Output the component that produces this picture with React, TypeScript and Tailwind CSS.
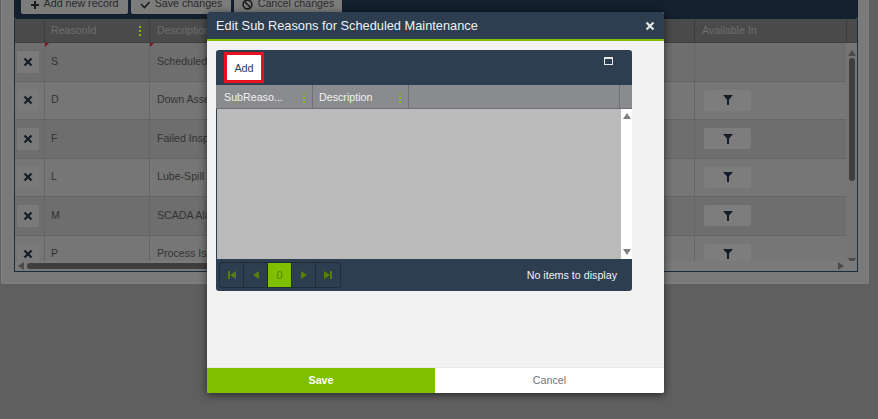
const rows = [
  { id: 'S', desc: 'Scheduled Maintenance', filter: false },
  { id: 'D', desc: 'Down Asset', filter: true },
  { id: 'F', desc: 'Failed Inspection', filter: true },
  { id: 'L', desc: 'Lube-Spill', filter: true },
  { id: 'M', desc: 'SCADA Alarm', filter: true },
  { id: 'P', desc: 'Process Issue', filter: true },
]

function Cross({ className }: { className: string }) {
  return (
    <svg viewBox="0 0 10 10" className={className} fill="none" stroke="currentColor" strokeWidth="2.2">
      <path d="M1.5 1.5l7 7M8.5 1.5l-7 7" />
    </svg>
  )
}

function Filter() {
  return (
    <svg viewBox="0 0 10 10" className="w-[10px] h-[10px] text-[#141d27]" fill="currentColor">
      <path d="M0 0h10L6 4.4V10H4V4.4z" />
    </svg>
  )
}

function Grip() {
  return (
    <span className="flex flex-col gap-[2px] shrink-0">
      <i className="block w-[2px] h-[2px] bg-[#7fbf00]" />
      <i className="block w-[2px] h-[2px] bg-[#7fbf00]" />
      <i className="block w-[2px] h-[2px] bg-[#7fbf00]" />
    </span>
  )
}

type Dir = 'up' | 'down' | 'left' | 'right' | 'first' | 'last'

function Arrow({ dir, className = '' }: { dir: Dir; className?: string }) {
  const d = {
    up: 'M4 1l4 6H0z',
    down: 'M4 7L0 1h8z',
    left: 'M1 4l6-4v8z',
    right: 'M7 4L1 8V0z',
    first: 'M0 0h2v8H0zM8 0v8L2 4z',
    last: 'M8 0H6v8h2zM0 0v8l6-4z',
  }[dir]
  return (
    <svg viewBox="0 0 8 8" className={`w-[8px] h-[8px] ${className}`} fill="currentColor">
      <path d={d} />
    </svg>
  )
}

function PagerCell({ children, active = false }: { children: React.ReactNode; active?: boolean }) {
  return (
    <div
      className={`w-[24px] flex items-center justify-center border-r border-[#1f2d3b] last:border-r-0 text-[#568008] ${
        active ? 'bg-[#7fbf00] text-[11px]' : ''
      }`}
    >
      {children}
    </div>
  )
}

function ToolButton({ label, icon, width }: { label: string; icon: React.ReactNode; width: string }) {
  return (
    <div
      className={`h-[14px] flex items-end justify-center gap-[5px] pb-[5px] rounded-b-[2px] bg-[#7c7c7c] text-[10.7px] leading-[12px] text-[#2a2a2a] ${width}`}
    >
      {icon}
      <span className="whitespace-nowrap">{label}</span>
    </div>
  )
}

function Corner() {
  return <span className="absolute left-0 top-0 w-0 h-0 border-t-[4px] border-r-[4px] border-t-[#8a0f12] border-r-transparent" />
}

function Background() {
  return (
    <div className="h-[284px] mr-[9px] ml-px flex flex-col bg-[#7a7a7a] border-r border-b border-l border-[#808080] pl-[12px] pr-[10px] rounded-b-[2px]">
      <div className="h-[19px] shrink-0 bg-[#14202d] rounded-b-[2px] flex items-start gap-[3px] pl-[7px]">
        <ToolButton
          width="w-[107px]"
          label="Add new record"
          icon={
            <svg viewBox="0 0 8 8" className="w-[8px] h-[8px] text-[#1c1c1c]" fill="currentColor">
              <path d="M3 0h2v3h3v2H5v3H3V5H0V3h3z" />
            </svg>
          }
        />
        <ToolButton
          width="w-[100px]"
          label="Save changes"
          icon={
            <svg viewBox="0 0 10 8" className="w-[10px] h-[8px] text-[#1c1c1c]" fill="none" stroke="currentColor" strokeWidth="1.6">
              <path d="M1 3l3.5 3.5L9.5 1" />
            </svg>
          }
        />
        <ToolButton
          width="w-[108px]"
          label="Cancel changes"
          icon={
            <svg viewBox="0 0 11 11" className="w-[11px] h-[11px] -mb-[1px] text-[#1c1c1c]" fill="none" stroke="currentColor" strokeWidth="1.6">
              <circle cx="5.5" cy="5.5" r="4.4" />
              <path d="M2.5 2.5l6 6" />
            </svg>
          }
        />
      </div>
      <div className="h-[253px] flex flex-col border-l border-r border-b border-[#1e2c3a] overflow-hidden relative">
        <div className="h-[24px] shrink-0 flex bg-[#4a4a4a] text-[10.6px] text-[#6f6f6f] border-b border-[#404040]">
          <div className="w-[30px] border-r border-[#3e3e3e]" />
          <div className="w-[105px] border-r border-[#3e3e3e] flex items-center justify-between pl-[6px] pr-[8px]">
            ReasonId
            <Grip />
          </div>
          <div className="w-[545px] flex items-center pl-[7px] border-r border-[#3e3e3e]">Description</div>
          <div className="w-[152px] flex items-center pl-[7px] border-r border-[#3e3e3e]">Available In</div>
          <div className="flex-1" />
        </div>
        <div className="flex-1 flex min-h-0">
          <div className="flex-1 flex flex-col min-w-0 overflow-hidden">
            {rows.map((r, i) => (
              <div
                key={r.id}
                className={`h-[38.5px] shrink-0 flex items-center text-[10.6px] text-[#333333] border-b border-[#656565] ${
                  i % 2 === 0 ? 'bg-[#6e6e6e]' : 'bg-[#767676]'
                }`}
              >
                <div className="w-[30px] h-full flex items-center pl-[2px] border-r border-[#666666]">
                  <div className="w-[22px] h-[22px] rounded-[2px] bg-[#7a7a7a] flex items-center justify-center">
                    <Cross className="w-[10px] h-[10px] text-[#141d27]" />
                  </div>
                </div>
                <div className="w-[105px] h-full flex items-center pl-[6px] border-r border-[#666666] relative">
                  {i === 0 && <Corner />}
                  {r.id}
                </div>
                <div className="w-[545px] h-full flex items-center pl-[7px] border-r border-[#666666] relative">
                  {i === 0 && <Corner />}
                  {r.desc}
                </div>
                <div className="flex-1 h-full flex items-center pl-[9px]">
                  {r.filter && (
                    <div className="w-[47px] h-[21px] rounded-[2px] bg-[#7d7d7d] flex items-center justify-center">
                      <Filter />
                    </div>
                  )}
                </div>
              </div>
            ))}
          </div>
          <div className="w-[11px] shrink-0 flex flex-col items-center justify-between bg-[#757575] py-[6px]">
            <Arrow dir="up" className="text-[#4a4a4a]" />
            <div className="w-[6px] flex-1 my-[1px] mb-[76px] rounded-full bg-[#3f3f3f]" />
            <Arrow dir="down" className="text-[#4a4a4a]" />
          </div>
        </div>
        <div className="absolute left-0 right-0 bottom-0 h-[10px] bg-[#7a7a7a] flex items-center px-[2px]">
          <Arrow dir="left" className="text-[#4a4a4a]" />
          <div className="w-[500px] h-[6px] rounded-full bg-[#3f3f3f] ml-[2px]" />
          <div className="flex-1" />
          <Arrow dir="right" className="text-[#4a4a4a] mr-[10px]" />
        </div>
      </div>
    </div>
  )
}

function Modal() {
  return (
    <div className="absolute left-[207px] top-[12px] w-[457px] h-[381px] flex flex-col bg-[#f1f1f1] rounded-[2px] shadow-[0_2px_8px_rgba(0,0,0,0.6)] overflow-hidden">
      <div className="h-[29px] shrink-0 flex items-center justify-between px-[9px] bg-[#2c3e50] border-b-[2px] border-[#7fbf00]">
        <span className="text-[12.8px] pt-[1px] text-[#f1f1f1]">Edit Sub Reasons for Scheduled Maintenance</span>
        <Cross className="w-[10px] h-[10px] text-[#e8e8e8]" />
      </div>
      <div className="flex-1 min-h-0 pt-[9px] pl-[9px] pr-[32px]">
        <div className="h-[241px] flex flex-col rounded-[3px] overflow-hidden bg-[#2c3e50]">
          <div className="h-[35px] shrink-0 flex items-start justify-between pt-[2px] pl-[8px] pr-[19px]">
            <button className="w-[40px] h-[31px] pt-[1px] border-[3px] border-[#e8111f] bg-white text-[10.8px] text-[#2c3e50]">Add</button>
            <div className="w-[9px] h-[8px] mt-[5px] border border-[#e8e8e8] border-t-[2px]" />
          </div>
          <div className="h-[24px] shrink-0 flex pl-px bg-[#8a8b8e] text-[10.7px] text-[#f1f1f1] border-b border-[#6f7072]">
            <div className="w-[96px] flex items-center justify-between pl-[7px] pr-[7px] pt-[2px] border-r border-[#6f7072]">
              SubReaso...
              <Grip />
            </div>
            <div className="w-[96px] flex items-center justify-between pl-[6px] pr-[7px] pt-[2px] border-r border-[#6f7072]">
              Description
              <Grip />
            </div>
            <div className="flex-1 border-r border-[#6f7072] mr-[12px]" />
          </div>
          <div className="h-[150px] shrink-0 flex bg-[#bababa] ml-px">
            <div className="flex-1" />
            <div className="w-[11px] bg-white flex flex-col items-center justify-between py-[3px]">
              <Arrow dir="up" className="text-[#808080]" />
              <Arrow dir="down" className="text-[#808080]" />
            </div>
          </div>
          <div className="flex-1 flex items-center justify-between pl-[3px] pr-[15px]">
            <div className="h-[26px] flex rounded-[3px] overflow-hidden border border-[#1f2d3b]">
              <PagerCell><Arrow dir="first" /></PagerCell>
              <PagerCell><Arrow dir="left" /></PagerCell>
              <PagerCell active>0</PagerCell>
              <PagerCell><Arrow dir="right" /></PagerCell>
              <PagerCell><Arrow dir="last" /></PagerCell>
            </div>
            <span className="text-[10.7px] text-[#f1f1f1]">No items to display</span>
          </div>
        </div>
      </div>
      <div className="h-[26px] shrink-0 flex text-[10.7px] border-t border-[#e8e8e8]">
        <button className="w-[228px] bg-[#7fbf00] font-bold text-white">Save</button>
        <button className="flex-1 bg-white text-[#6b7683]">Cancel</button>
      </div>
    </div>
  )
}

export default function App() {
  return (
    <div className="relative h-[419px] w-[878px] overflow-hidden bg-[#5f5f5f] font-['Liberation_Sans',Arial,sans-serif]">
      <Background />
      <Modal />
    </div>
  )
}
